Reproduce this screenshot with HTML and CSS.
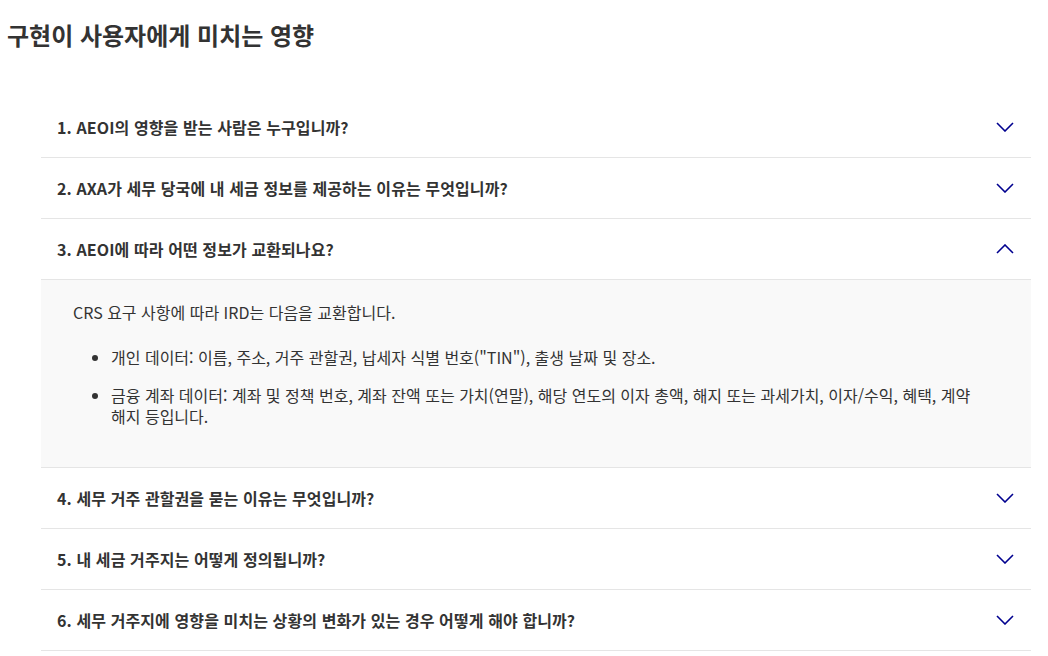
FILE: index.html
```html
<!DOCTYPE html>
<html lang="ko">
<head>
    <meta charset="UTF-8">
    <meta name="viewport" content="width=device-width, initial-scale=1.0">
    <title>구현이 사용자에게 미치는 영향</title>
    <link rel="stylesheet" href="styles.css">
</head>
<body>
    <div class="page">
        <h1>구현이 사용자에게 미치는 영향</h1>

        <div class="accordion">
            <div class="item">
                <div class="question">
                    <span>1. AEOI의 영향을 받는 사람은 누구입니까?</span>
                    <svg class="chevron" width="18" height="10" viewBox="0 0 18 10"><path d="M1 1 L9 9 L17 1" /></svg>
                </div>
            </div>
            <div class="item">
                <div class="question">
                    <span>2. AXA가 세무 당국에 내 세금 정보를 제공하는 이유는 무엇입니까?</span>
                    <svg class="chevron" width="18" height="10" viewBox="0 0 18 10"><path d="M1 1 L9 9 L17 1" /></svg>
                </div>
            </div>
            <div class="item open">
                <div class="question">
                    <span>3. AEOI에 따라 어떤 정보가 교환되나요?</span>
                    <svg class="chevron" width="18" height="10" viewBox="0 0 18 10"><path d="M1 9 L9 1 L17 9" /></svg>
                </div>
                <div class="answer">
                    <p>CRS 요구 사항에 따라 IRD는 다음을 교환합니다.</p>
                    <ul>
                        <li>개인 데이터: 이름, 주소, 거주 관할권, 납세자 식별 번호("TIN"), 출생 날짜 및 장소.</li>
                        <li>금융 계좌 데이터: 계좌 및 정책 번호, 계좌 잔액 또는 가치(연말), 해당 연도의 이자 총액, 해지 또는 과세가치, 이자/수익, 혜택, 계약 해지 등입니다.</li>
                    </ul>
                </div>
            </div>
            <div class="item">
                <div class="question">
                    <span>4. 세무 거주 관할권을 묻는 이유는 무엇입니까?</span>
                    <svg class="chevron" width="18" height="10" viewBox="0 0 18 10"><path d="M1 1 L9 9 L17 1" /></svg>
                </div>
            </div>
            <div class="item">
                <div class="question">
                    <span>5. 내 세금 거주지는 어떻게 정의됩니까?</span>
                    <svg class="chevron" width="18" height="10" viewBox="0 0 18 10"><path d="M1 1 L9 9 L17 1" /></svg>
                </div>
            </div>
            <div class="item">
                <div class="question">
                    <span>6. 세무 거주지에 영향을 미치는 상황의 변화가 있는 경우 어떻게 해야 합니까?</span>
                    <svg class="chevron" width="18" height="10" viewBox="0 0 18 10"><path d="M1 1 L9 9 L17 1" /></svg>
                </div>
            </div>
        </div>
    </div>
</body>
</html>
```

FILE: styles.css
```css
body {
    margin: 0;
    padding: 0;
    background: #fff;
    color: #333;
    font-family: "Noto Sans CJK KR", "Noto Sans", sans-serif;
}
.page {
    padding: 20px 7px;
}
h1 {
    margin: 0;
    font-size: 24px;
    line-height: 30px;
    font-weight: 700;
    color: #333;
}
.accordion {
    margin: 47px 10px 0 34px;
}
.item {
    border-bottom: 1px solid #e5e5e5;
}
.question {
    display: flex;
    align-items: center;
    justify-content: space-between;
    height: 60px;
    padding: 0 17px 0 16px;
    font-size: 16px;
    font-weight: 700;
    letter-spacing: 0.1px;
    color: #333;
    cursor: pointer;
}
.chevron {
    flex: none;
}
.chevron path {
    fill: none;
    stroke: #00008f;
    stroke-width: 1.6;
}
.open .question {
    border-bottom: 1px solid #e5e5e5;
}
.answer {
    background: #f9f9f9;
    padding: 22px 32px 40px 32px;
    font-size: 16px;
    line-height: 21px;
    color: #333;
    word-break: keep-all;
}
.answer p {
    margin: 0 0 24px 0;
}
.answer ul {
    margin: 0;
    padding-left: 38px;
}
.answer li {
    margin-bottom: 17px;
}
.answer li:last-child {
    margin-bottom: 0;
}
```
